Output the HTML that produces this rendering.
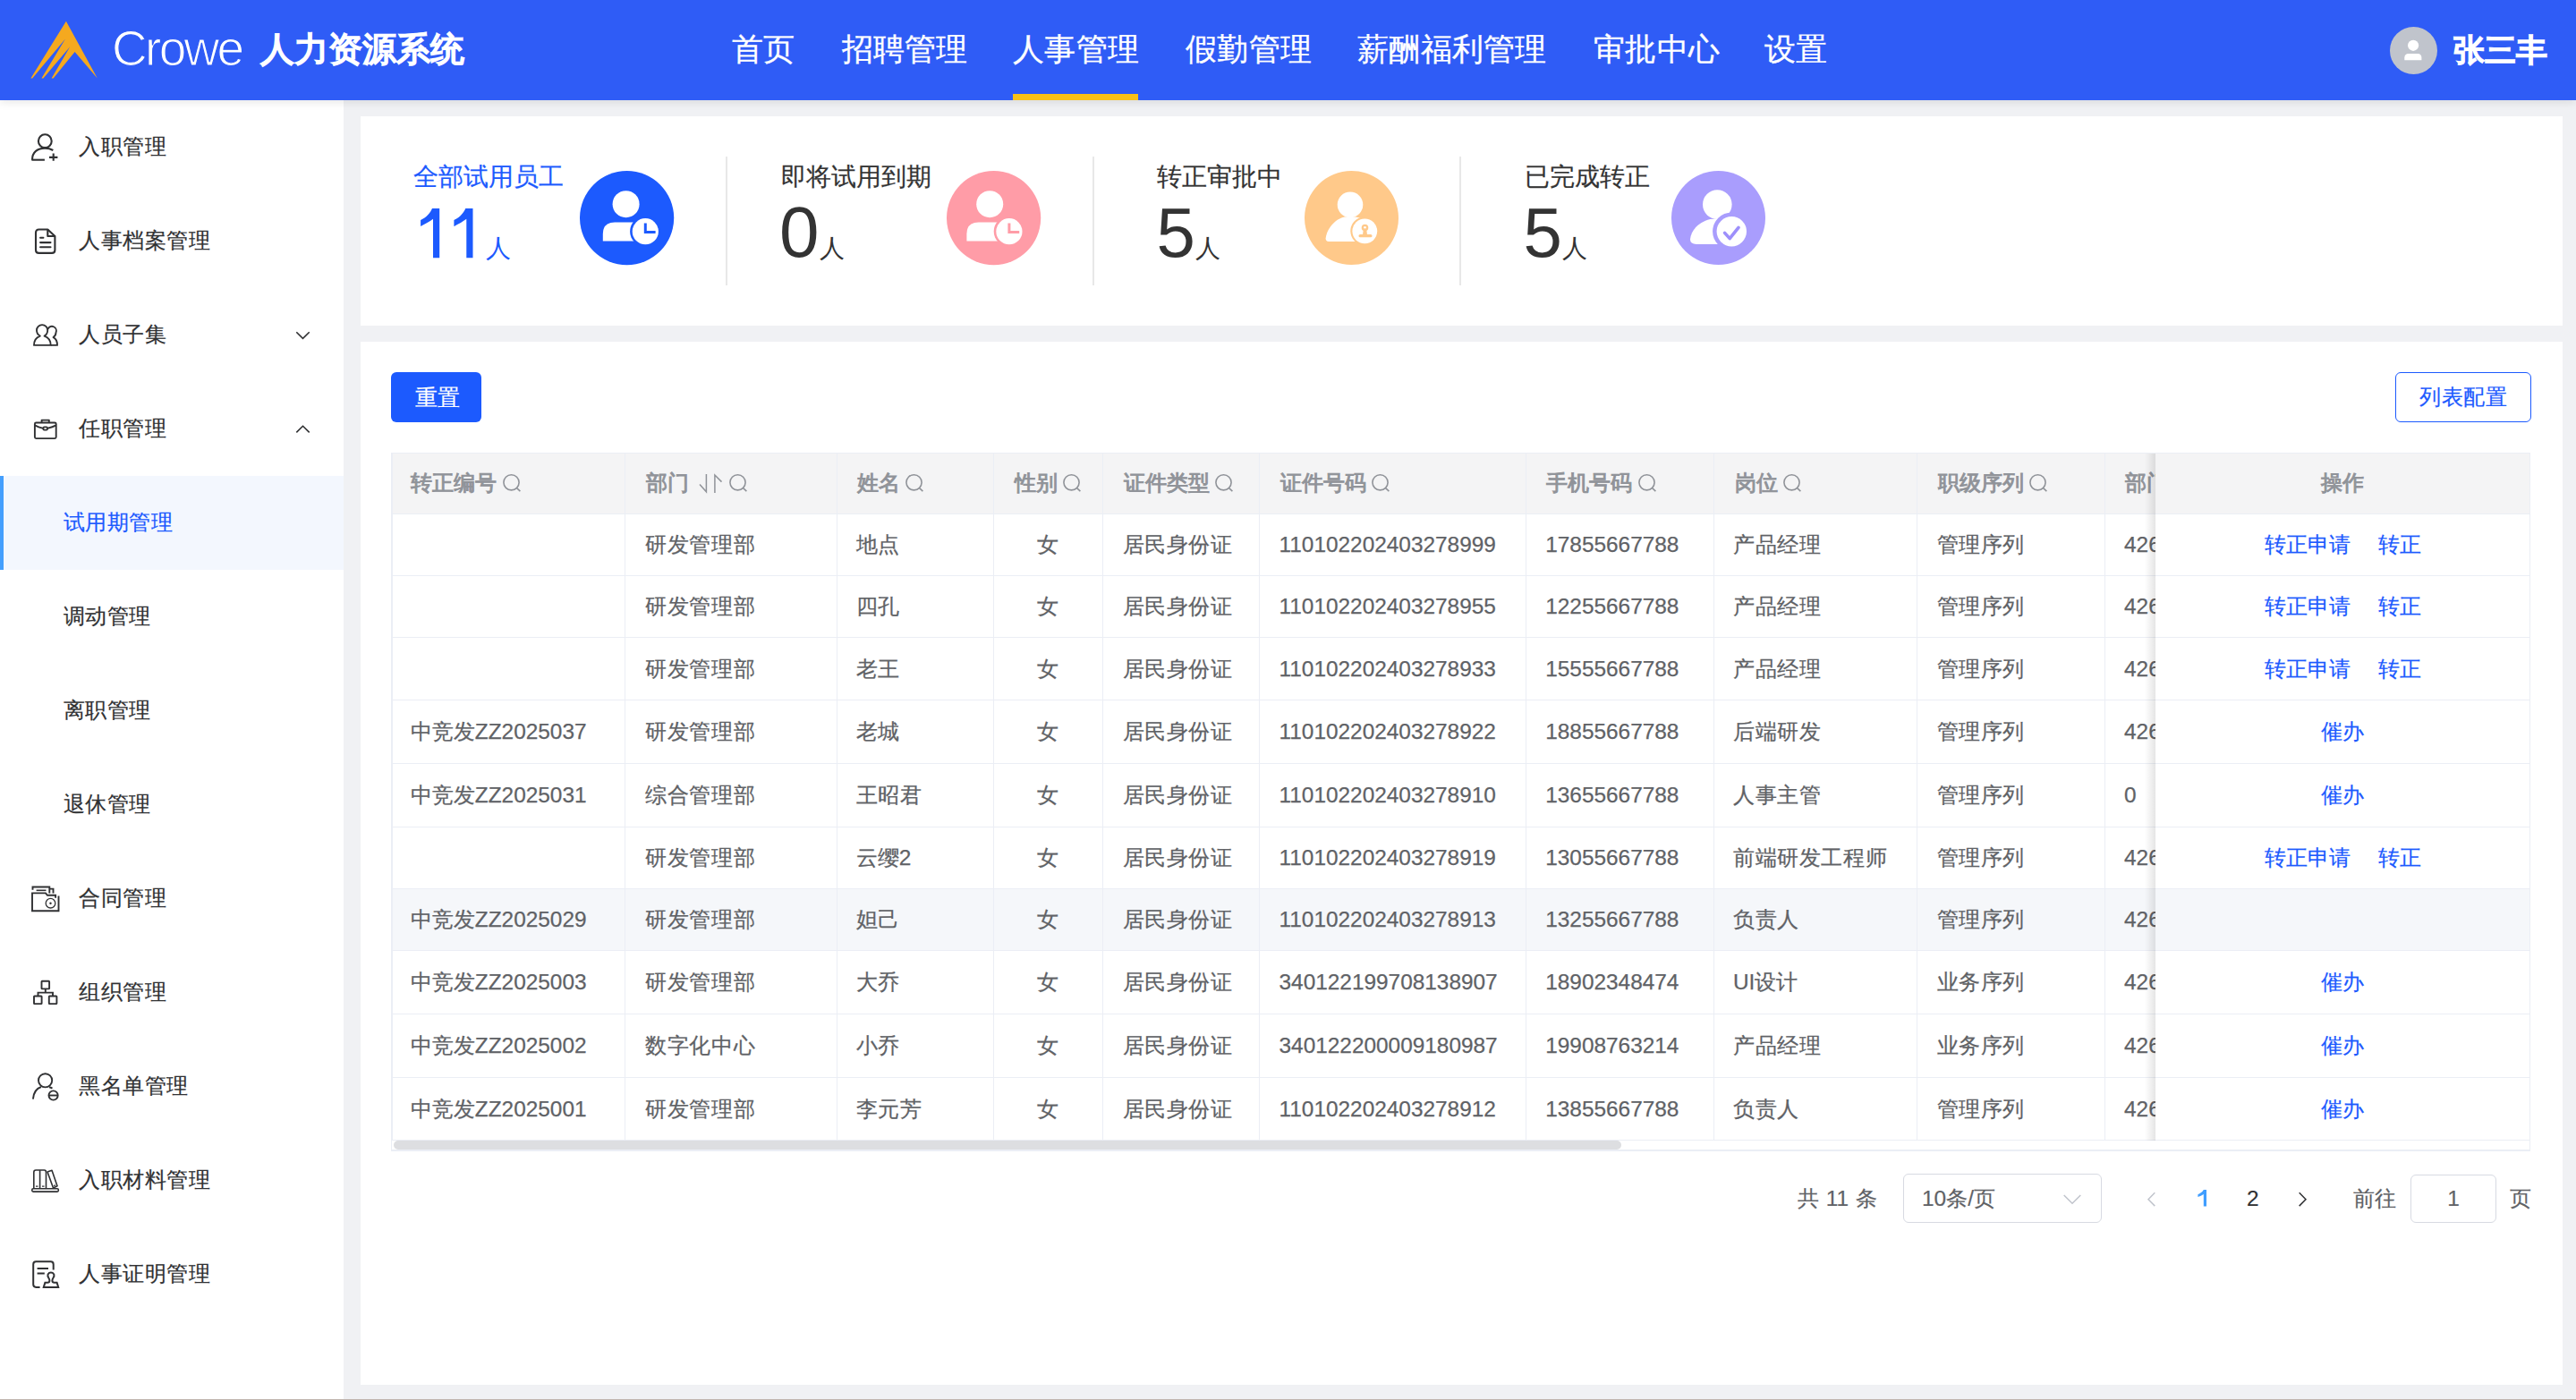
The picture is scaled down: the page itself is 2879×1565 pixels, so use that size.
<!DOCTYPE html>
<html><head><meta charset="utf-8">
<style>
*{box-sizing:border-box;margin:0;padding:0}
html,body{width:2879px;height:1565px;overflow:hidden}
body{position:relative;background:#f0f1f4;font-family:"Liberation Sans",sans-serif;color:#303133}
.abs{position:absolute}
#hdr{position:absolute;left:0;top:0;width:2879px;height:112px;background:#2f5cf6;z-index:5;box-shadow:0 2px 10px rgba(0,0,0,0.10)}
.nav{position:absolute;top:-1px;height:112px;line-height:112px;font-size:35px;letter-spacing:0.3px;color:#fff;white-space:nowrap;-webkit-text-stroke:0.3px #fff}
.nav.on:after{content:"";position:absolute;left:0;width:140px;bottom:-1px;height:7px;background:#f8c117}
#side{position:absolute;left:0;top:112px;width:384px;height:1452px;background:#fff}
.mi{position:absolute;left:0;width:384px;height:105px;line-height:105px;font-size:24px;letter-spacing:0.5px;color:#303133;white-space:nowrap;-webkit-text-stroke:0.2px currentColor}
.mi .t{position:absolute;left:88px;top:-1px}
.mi.sub .t{left:70.5px}
.mi svg{position:absolute;left:25px;top:23px}
.mi.on{background:#f3f7fe;color:#1c5afe}
.mi.on:before{content:"";position:absolute;left:0;top:0;width:4px;height:105px;background:#449ffd}
.card{position:absolute;background:#fff}
.stl{position:absolute;font-size:28px;line-height:28px;color:#333;white-space:nowrap;-webkit-text-stroke:0.2px currentColor}
.stn{position:absolute;font-size:78px;line-height:78px;color:#333;white-space:nowrap}
.stu{position:absolute;font-size:28px;line-height:28px;color:#333}
.div{position:absolute;top:175px;width:2px;height:144px;background:#e8e8e8}
.th{font-size:24.4px;color:#909399;-webkit-text-stroke:1px #909399;white-space:nowrap}
.td{font-size:24.4px;color:#606266;white-space:nowrap;-webkit-text-stroke:0.25px #606266}
.cj{font-size:24px;letter-spacing:0.6px}
.lk{font-size:24.4px;color:#1c5afe;white-space:nowrap;-webkit-text-stroke:0.2px #1c5afe}
.pg{font-size:24.4px;color:#606266;white-space:nowrap;-webkit-text-stroke:0.2px currentColor}
</style></head><body>
<div id="hdr">
  <svg class="abs" style="left:0;top:0" width="130" height="112" viewBox="0 0 130 112">
    <path fill="#f5a91f" d="M73.9 23.8 L108.8 87.5 L83.6 58 L59.6 87.5 L57.6 87.5 L78.2 52.3 L48.4 87.5 L46.4 87.5 L73 43.5 L36.2 87.5 L34.4 87.5 Z"/>
  </svg>
  <div class="abs" style="left:125px;top:27px;font-size:55px;line-height:55px;color:#fff;letter-spacing:-2.7px;-webkit-text-stroke:1.2px #2f5cf6">Crowe</div>
  <div class="abs" style="left:290.5px;top:36px;font-size:38px;line-height:38px;color:#fff;-webkit-text-stroke:1.9px #fff">人力资源系统</div>
  <div class="nav" style="left:818px">首页</div>
  <div class="nav" style="left:940.5px">招聘管理</div>
  <div class="nav on" style="left:1132px">人事管理</div>
  <div class="nav" style="left:1325px">假勤管理</div>
  <div class="nav" style="left:1517px">薪酬福利管理</div>
  <div class="nav" style="left:1781px">审批中心</div>
  <div class="nav" style="left:1972px">设置</div>
  <svg class="abs" style="left:2671px;top:30px" width="53" height="53" viewBox="0 0 53 53"><circle cx="26.5" cy="26.5" r="26.5" fill="#c0c4cc"/><circle cx="26.1" cy="20.8" r="6.1" fill="#fff"/><path d="M16.3 37.3 V34.6 Q16.3 29.9 21 29.9 H31 Q35.4 29.9 35.4 34.6 V37.3 Z" fill="#fff"/></svg>
  <div class="abs" style="left:2742px;top:0;height:112px;line-height:112px;font-size:35px;color:#fff;-webkit-text-stroke:2.1px #fff">张三丰</div>
</div>

<div id="side">
  <div class="mi" style="top:0">
    <svg width="60" height="60" viewBox="0 0 60 60" fill="none" stroke="#303133" stroke-width="2.1" stroke-linecap="butt"><circle cx="25.3" cy="22.7" r="7.4"/><path d="M11 43.7 C11 35 17 30.6 25.3 30.6 C29 30.6 32 31.5 34.3 33"/><path d="M10.4 43.7 H24.9"/><path d="M30 40.9 H39.4 M34.7 36.4 V44.8"/></svg>
    <span class="t">入职管理</span></div>
  <div class="mi" style="top:105px">
    <svg width="60" height="60" viewBox="0 0 60 60" fill="none" stroke="#303133" stroke-width="2.1" stroke-linejoin="round"><path d="M28.3 16.5 H18.5 Q15 16.5 15 20 V39.4 Q15 42.9 18.5 42.9 H32.9 Q36.4 42.9 36.4 39.4 V24 Z"/><path d="M28.3 16.5 V24 H36.4"/><path d="M20.1 25.7 H23.4 M20.1 31.1 H31.5 M20.1 36.2 H31.5" stroke-linecap="round"/></svg>
    <span class="t">人事档案管理</span></div>
  <div class="mi" style="top:210px">
    <svg width="60" height="60" viewBox="0 0 60 60" fill="none" stroke="#303133" stroke-width="1.9" stroke-linejoin="round"><path d="M13 40.9 C13 35 16 32 19.8 30.6 C17 29 16 27 16 24.2 A6.1 6.1 0 0 1 28.2 24.2 C28.2 27 27 29 24.6 30.6 C28.5 32 31.7 35.5 31.7 40.9 Z"/><path d="M28.4 22.8 A4.9 4.9 0 0 1 37.5 26.8 C37.5 29 36.5 30.8 34.6 32.1 C37.4 33.4 39 36.5 39 40.9 H31.7"/></svg>
    <span class="t">人员子集</span>
    <svg style="left:326px;top:43px" width="25" height="20" viewBox="0 0 25 20" fill="none" stroke="#303133" stroke-width="1.6"><path d="M5.3 6.3 L12.5 13.4 L19.7 6.3"/></svg></div>
  <div class="mi" style="top:315px">
    <svg width="60" height="60" viewBox="0 0 60 60" fill="none" stroke="#303133" stroke-width="1.9" stroke-linejoin="round"><rect x="13.9" y="22.5" width="23.8" height="17.6" rx="1.5"/><path d="M21.6 22.5 V19.6 H29.8 V22.5"/><path d="M13.9 25.3 C17 27 20 28 23.4 28.9 M27.9 28.9 C31.3 28 34.5 27 37.7 25.3"/><rect x="23.4" y="27.4" width="4.5" height="3.2" rx="1"/></svg>
    <span class="t">任职管理</span>
    <svg style="left:326px;top:43px" width="25" height="20" viewBox="0 0 25 20" fill="none" stroke="#303133" stroke-width="1.6"><path d="M5.3 13.4 L12.5 6.3 L19.7 13.4"/></svg></div>
  <div class="mi sub on" style="top:420px"><span class="t">试用期管理</span></div>
  <div class="mi sub" style="top:525px"><span class="t">调动管理</span></div>
  <div class="mi sub" style="top:630px"><span class="t">离职管理</span></div>
  <div class="mi sub" style="top:735px"><span class="t">退休管理</span></div>
  <div class="mi" style="top:840px">
    <svg width="60" height="60" viewBox="0 0 60 60" fill="none" stroke="#303133" stroke-width="1.9"><path d="M11.5 19.8 V16.5 H30.3 V23.5 M30.3 18.6 H34.5 V23.5"/><path d="M15.6 20.3 H26.5" stroke-width="1.6"/><path d="M37.1 28.8 V25.8 H28 L26 23.4 H11 V43.2 H40.5 V26.4"/><circle cx="31.5" cy="34.7" r="5.3" stroke-width="1.3"/><circle cx="31.5" cy="34.8" r="1.2" fill="#303133" stroke="none"/></svg>
    <span class="t">合同管理</span></div>
  <div class="mi" style="top:945px">
    <svg width="60" height="60" viewBox="0 0 60 60" fill="none" stroke="#303133" stroke-width="1.9"><rect x="21.5" y="16.8" width="8.6" height="8.6" rx="0.6"/><path d="M25.8 25.4 V29.6 M17.5 33.5 V29.6 H34 V33.5"/><rect x="13" y="33.5" width="8.6" height="8.6" rx="0.6"/><rect x="29.8" y="33.5" width="8.6" height="8.6" rx="0.6"/></svg>
    <span class="t">组织管理</span></div>
  <div class="mi" style="top:1050px">
    <svg width="60" height="60" viewBox="0 0 60 60" fill="none" stroke="#303133" stroke-width="1.9"><circle cx="25.6" cy="22.8" r="7.6"/><path d="M11.9 43.6 C12.5 36 16.5 31.5 21 30 M30 30.2 C31.5 30.5 32.5 31 33.5 31.6"/><circle cx="34.6" cy="39.5" r="5.1"/><path d="M29.8 39.5 H39.4"/></svg>
    <span class="t">黑名单管理</span></div>
  <div class="mi" style="top:1155px">
    <svg width="60" height="60" viewBox="0 0 60 60" fill="none" stroke="#303133" stroke-width="1.6" stroke-linejoin="round"><path d="M12.8 38.7 V20.5 Q12.8 18 15 18 H24.5 Q26.5 18 26.5 20.5 V38.7"/><path d="M19.6 18 V38.7"/><path d="M28 20 L33 18.3 L39 35.8 L34.5 38 Z"/><rect x="10.8" y="38.8" width="29.5" height="3.3" rx="1.3"/><path d="M15 36.2 H17.5 M22 36.2 H24.5 M35 35.5 L37 34.8" stroke-width="1.3"/></svg>
    <span class="t">入职材料管理</span></div>
  <div class="mi" style="top:1260px">
    <svg width="60" height="60" viewBox="0 0 60 60" fill="none" stroke="#303133" stroke-width="2"><path d="M19.6 43.9 H15.3 Q12.2 43.9 12.2 40.8 V18.4 Q12.2 15.3 15.3 15.3 H31.6 Q34.7 15.3 34.7 18.4 V24.5"/><path d="M16.6 22.9 H29 M16.6 28.6 H24.8"/><path d="M23.8 43.9 L25.4 38.8 H28 Q30.4 38.8 30.4 36.5 Q30.4 35 29.2 33.2 Q28 31.5 28.6 29.5 Q29.8 27.6 31.9 27.6 Q34 27.6 35.3 29.5 Q35.9 31.5 34.6 33.2 Q33.4 35 33.4 36.5 Q33.4 38.8 35.8 38.8 H38.6 L40.2 43.9 Z"/></svg>
    <span class="t">人事证明管理</span></div>
</div>
<div class="abs" style="left:0;top:1564px;width:2879px;height:1px;background:#c0b5af"></div>

<div class="card" style="left:403px;top:130px;width:2461px;height:234px"></div>
<div class="stl" style="left:462px;top:184px;color:#1c5afe">全部试用员工</div>
<svg class="abs" style="left:483.7px;top:232.7px;overflow:visible" width="50" height="56" viewBox="0 0 50 56" fill="#1c5afe"><path transform="translate(0 0)" d="M0 0 H7.2 V55.3 H0 V11.8 C-4 14.6 -9 17.8 -13.9 19.9 V13 C-7.5 10 -3 5 -1 0 Z"/><path transform="translate(37.3 0)" d="M0 0 H7.2 V55.3 H0 V11.8 C-4 14.6 -9 17.8 -13.9 19.9 V13 C-7.5 10 -3 5 -1 0 Z"/></svg><div class="stu" style="left:543px;top:264px;color:#1c5afe">人</div>
<div class="abs" style="left:647.7px;top:190.9px"><svg width="106" height="106" viewBox="0 0 106 106"><circle cx="52.6" cy="52.6" r="52.6" fill="#1c5afe"/><circle cx="51.6" cy="37.2" r="15" fill="#fff"/><path d="M25.8 78.5 V70.5 Q25.8 57.4 39 57.4 H62 V78.5 Z" fill="#fff"/><circle cx="73.3" cy="67.7" r="17.2" fill="#1c5afe"/><circle cx="73.3" cy="67.7" r="14.6" fill="#fff"/><path d="M73.3 58.4 V68.6 H84.6" fill="none" stroke="#1c5afe" stroke-width="3"/></svg></div>
<div class="div" style="left:811px"></div>
<div class="stl" style="left:873px;top:184px">即将试用到期</div>
<div class="stn" style="left:871px;top:221px;font-size:80px">0</div><div class="stu" style="left:916px;top:264px">人</div>
<div class="abs" style="left:1057.8px;top:190.9px"><svg width="106" height="106" viewBox="0 0 106 106"><circle cx="52.6" cy="52.6" r="52.6" fill="#ff9ca7"/><g transform="translate(-3.4 0)"><circle cx="51.6" cy="37.2" r="15" fill="#fff"/><path d="M25.8 78.5 V70.5 Q25.8 57.4 39 57.4 H62 V78.5 Z" fill="#fff"/><circle cx="73.3" cy="67.7" r="17.2" fill="#ff9ca7"/><circle cx="73.3" cy="67.7" r="14.6" fill="#fff"/><path d="M73.3 58.4 V68.6 H84.6" fill="none" stroke="#ff9ca7" stroke-width="3"/></g></svg></div>
<div class="div" style="left:1221px"></div>
<div class="stl" style="left:1293px;top:184px">转正审批中</div>
<div class="stn" style="left:1292.5px;top:221px">5</div><div class="stu" style="left:1336px;top:264px">人</div>
<div class="abs" style="left:1458.1px;top:191px"><svg width="106" height="106" viewBox="0 0 106 106"><circle cx="52.5" cy="52.5" r="52.5" fill="#ffc98a"/><circle cx="51" cy="37.8" r="14.3" fill="#fff"/><path d="M44.6 51.5 C33 54 24.5 66 23.6 75.5 Q23.6 78.9 27 78.9 H66 V54 Q62 52 57 51.5 Z" fill="#fff"/><circle cx="67.3" cy="67.3" r="16" fill="#ffc98a"/><circle cx="67.3" cy="67.3" r="13.9" fill="#fff"/><circle cx="67.5" cy="63.6" r="3.8" fill="#ffc98a"/><circle cx="67.5" cy="63.3" r="1.3" fill="#fff"/><path d="M65.6 66.5 L65 71.5 H70 L69.4 66.5 Z" fill="#ffc98a"/><rect x="60.5" y="71" width="15" height="3.3" rx="1.6" fill="#ffc98a"/></svg></div>
<div class="div" style="left:1631px"></div>
<div class="stl" style="left:1704px;top:184px">已完成转正</div>
<div class="stn" style="left:1702.5px;top:221px">5</div><div class="stu" style="left:1746px;top:264px">人</div>
<div class="abs" style="left:1868.1px;top:191px"><svg width="106" height="106" viewBox="0 0 106 106"><circle cx="52.5" cy="52.5" r="52.5" fill="#a99dfd"/><circle cx="51.3" cy="37.6" r="16.3" fill="#fff"/><path d="M43.3 54 C31 57 22 66 21 76.5 Q21 81.9 28 81.9 H62 V56 Q58 53.5 55 53.5 Z" fill="#fff"/><circle cx="67.3" cy="67.7" r="21.2" fill="#a99dfd"/><circle cx="67.3" cy="67.7" r="16.7" fill="#fff"/><path d="M59.6 69.4 L65.2 75.6 L75 63.3" fill="none" stroke="#9d8ffb" stroke-width="3.6" stroke-linecap="round" stroke-linejoin="round"/></svg></div>

<div class="card" style="left:403px;top:382px;width:2461px;height:1166px"></div>

<!--TABLE-->
<div class="abs" style="left:437px;top:416px;width:101px;height:56px;border-radius:6px;background:#1c5afe"></div>
<div class="abs" style="left:463.5px;top:416px;height:56px;line-height:56px;font-size:25px;color:#fff;-webkit-text-stroke:0.2px #fff">重置</div>
<div class="abs" style="left:2677px;top:416px;width:152px;height:56px;border-radius:6px;border:1.5px solid #1c5afe;background:#fff"></div>
<div class="abs" style="left:2704px;top:416px;height:56px;line-height:56px;font-size:24.4px;letter-spacing:0.5px;color:#1c5afe;-webkit-text-stroke:0.2px #1c5afe">列表配置</div>
<div class="abs" style="left:437px;top:506px;width:2391px;height:781px;border:1px solid #ebeef5;border-bottom-width:2px;overflow:hidden;background:#fff">
<div class="abs" style="left:0;top:0;width:2389px;height:67px;background:#f4f4f5"></div>
<div class="abs" style="left:0;top:487px;width:2389px;height:68px;background:#f5f7fa"></div>
<div class="abs" style="left:0;top:67px;width:2389px;height:1px;background:#ebeef5"></div>
<div class="abs" style="left:0;top:136px;width:2389px;height:1px;background:#ebeef5"></div>
<div class="abs" style="left:0;top:205px;width:2389px;height:1px;background:#ebeef5"></div>
<div class="abs" style="left:0;top:275px;width:2389px;height:1px;background:#ebeef5"></div>
<div class="abs" style="left:0;top:346px;width:2389px;height:1px;background:#ebeef5"></div>
<div class="abs" style="left:0;top:417px;width:2389px;height:1px;background:#ebeef5"></div>
<div class="abs" style="left:0;top:486px;width:2389px;height:1px;background:#ebeef5"></div>
<div class="abs" style="left:0;top:555px;width:2389px;height:1px;background:#ebeef5"></div>
<div class="abs" style="left:0;top:626px;width:2389px;height:1px;background:#ebeef5"></div>
<div class="abs" style="left:0;top:697px;width:2389px;height:1px;background:#ebeef5"></div>
<div class="abs" style="left:0;top:767px;width:2389px;height:1px;background:#ebeef5"></div>
<div class="abs" style="left:260.0px;top:0;width:1px;height:767px;background:#ebeef5"></div>
<div class="abs" style="left:497.0px;top:0;width:1px;height:767px;background:#ebeef5"></div>
<div class="abs" style="left:672.0px;top:0;width:1px;height:767px;background:#ebeef5"></div>
<div class="abs" style="left:794.0px;top:0;width:1px;height:767px;background:#ebeef5"></div>
<div class="abs" style="left:969.0px;top:0;width:1px;height:767px;background:#ebeef5"></div>
<div class="abs" style="left:1267.0px;top:0;width:1px;height:767px;background:#ebeef5"></div>
<div class="abs" style="left:1477.0px;top:0;width:1px;height:767px;background:#ebeef5"></div>
<div class="abs" style="left:1704.0px;top:0;width:1px;height:767px;background:#ebeef5"></div>
<div class="abs" style="left:1914.0px;top:0;width:1px;height:767px;background:#ebeef5"></div>
<div class="abs" style="left:0;top:0;width:1px;height:767px;background:#ebeef5"></div>
<div class="abs th" style="left:21.0px;top:-1px;height:67px;line-height:67px">转正编号</div>
<svg class="abs" style="left:122.6px;top:21px" width="24" height="24" viewBox="0 0 24 24" fill="none" stroke="#909399" stroke-width="1.6"><circle cx="10.5" cy="11.3" r="8.6"/><path d="M16.6 17.6 L20.4 21.2"/></svg>
<div class="abs th" style="left:284.1px;top:-1px;height:67px;line-height:67px">部门</div>
<svg class="abs" style="left:342px;top:21px" width="30" height="24" viewBox="0 0 30 24" fill="none" stroke="#909399" stroke-width="1.5"><path d="M9.4 1.9 V21.8 L2 13.4"/><path d="M18.9 23 V3 L26.5 10.6"/></svg>
<svg class="abs" style="left:375.5px;top:21px" width="24" height="24" viewBox="0 0 24 24" fill="none" stroke="#909399" stroke-width="1.6"><circle cx="10.5" cy="11.3" r="8.6"/><path d="M16.6 17.6 L20.4 21.2"/></svg>
<div class="abs th" style="left:519.8px;top:-1px;height:67px;line-height:67px">姓名</div>
<svg class="abs" style="left:572.6px;top:21px" width="24" height="24" viewBox="0 0 24 24" fill="none" stroke="#909399" stroke-width="1.6"><circle cx="10.5" cy="11.3" r="8.6"/><path d="M16.6 17.6 L20.4 21.2"/></svg>
<div class="abs th" style="left:695.9px;top:-1px;height:67px;line-height:67px">性别</div>
<svg class="abs" style="left:748.7px;top:21px" width="24" height="24" viewBox="0 0 24 24" fill="none" stroke="#909399" stroke-width="1.6"><circle cx="10.5" cy="11.3" r="8.6"/><path d="M16.6 17.6 L20.4 21.2"/></svg>
<div class="abs th" style="left:817.7px;top:-1px;height:67px;line-height:67px">证件类型</div>
<svg class="abs" style="left:919.3px;top:21px" width="24" height="24" viewBox="0 0 24 24" fill="none" stroke="#909399" stroke-width="1.6"><circle cx="10.5" cy="11.3" r="8.6"/><path d="M16.6 17.6 L20.4 21.2"/></svg>
<div class="abs th" style="left:992.5px;top:-1px;height:67px;line-height:67px">证件号码</div>
<svg class="abs" style="left:1094.1px;top:21px" width="24" height="24" viewBox="0 0 24 24" fill="none" stroke="#909399" stroke-width="1.6"><circle cx="10.5" cy="11.3" r="8.6"/><path d="M16.6 17.6 L20.4 21.2"/></svg>
<div class="abs th" style="left:1290.2px;top:-1px;height:67px;line-height:67px">手机号码</div>
<svg class="abs" style="left:1391.8px;top:21px" width="24" height="24" viewBox="0 0 24 24" fill="none" stroke="#909399" stroke-width="1.6"><circle cx="10.5" cy="11.3" r="8.6"/><path d="M16.6 17.6 L20.4 21.2"/></svg>
<div class="abs th" style="left:1500.8px;top:-1px;height:67px;line-height:67px">岗位</div>
<svg class="abs" style="left:1553.6px;top:21px" width="24" height="24" viewBox="0 0 24 24" fill="none" stroke="#909399" stroke-width="1.6"><circle cx="10.5" cy="11.3" r="8.6"/><path d="M16.6 17.6 L20.4 21.2"/></svg>
<div class="abs th" style="left:1727.5px;top:-1px;height:67px;line-height:67px">职级序列</div>
<svg class="abs" style="left:1829.1px;top:21px" width="24" height="24" viewBox="0 0 24 24" fill="none" stroke="#909399" stroke-width="1.6"><circle cx="10.5" cy="11.3" r="8.6"/><path d="M16.6 17.6 L20.4 21.2"/></svg>
<div class="abs th" style="left:1937.1px;top:-1px;height:67px;line-height:67px">部门</div>
<div class="abs td cj" style="left:283.2px;top:68px;height:68px;line-height:68px">研发管理部</div>
<div class="abs td cj" style="left:518.8px;top:68px;height:68px;line-height:68px">地点</div>
<div class="abs td" style="left:672.0px;width:122.0px;text-align:center;top:68px;height:68px;line-height:68px">女</div>
<div class="abs td cj" style="left:816.7px;top:68px;height:68px;line-height:68px">居民身份证</div>
<div class="abs td" style="left:991.5px;top:68px;height:68px;line-height:68px">110102202403278999</div>
<div class="abs td" style="left:1289.2px;top:68px;height:68px;line-height:68px">17855667788</div>
<div class="abs td cj" style="left:1499.0px;top:68px;height:68px;line-height:68px">产品经理</div>
<div class="abs td cj" style="left:1726.5px;top:68px;height:68px;line-height:68px">管理序列</div>
<div class="abs td" style="left:1936.0px;top:68px;height:68px;line-height:68px">426</div>
<div class="abs td cj" style="left:283.2px;top:137px;height:68px;line-height:68px">研发管理部</div>
<div class="abs td cj" style="left:518.8px;top:137px;height:68px;line-height:68px">四孔</div>
<div class="abs td" style="left:672.0px;width:122.0px;text-align:center;top:137px;height:68px;line-height:68px">女</div>
<div class="abs td cj" style="left:816.7px;top:137px;height:68px;line-height:68px">居民身份证</div>
<div class="abs td" style="left:991.5px;top:137px;height:68px;line-height:68px">110102202403278955</div>
<div class="abs td" style="left:1289.2px;top:137px;height:68px;line-height:68px">12255667788</div>
<div class="abs td cj" style="left:1499.0px;top:137px;height:68px;line-height:68px">产品经理</div>
<div class="abs td cj" style="left:1726.5px;top:137px;height:68px;line-height:68px">管理序列</div>
<div class="abs td" style="left:1936.0px;top:137px;height:68px;line-height:68px">426</div>
<div class="abs td cj" style="left:283.2px;top:206px;height:69px;line-height:69px">研发管理部</div>
<div class="abs td cj" style="left:518.8px;top:206px;height:69px;line-height:69px">老王</div>
<div class="abs td" style="left:672.0px;width:122.0px;text-align:center;top:206px;height:69px;line-height:69px">女</div>
<div class="abs td cj" style="left:816.7px;top:206px;height:69px;line-height:69px">居民身份证</div>
<div class="abs td" style="left:991.5px;top:206px;height:69px;line-height:69px">110102202403278933</div>
<div class="abs td" style="left:1289.2px;top:206px;height:69px;line-height:69px">15555667788</div>
<div class="abs td cj" style="left:1499.0px;top:206px;height:69px;line-height:69px">产品经理</div>
<div class="abs td cj" style="left:1726.5px;top:206px;height:69px;line-height:69px">管理序列</div>
<div class="abs td" style="left:1936.0px;top:206px;height:69px;line-height:69px">426</div>
<div class="abs td" style="left:20.8px;top:276px;height:70px;line-height:70px">中竞发ZZ2025037</div>
<div class="abs td cj" style="left:283.2px;top:276px;height:70px;line-height:70px">研发管理部</div>
<div class="abs td cj" style="left:518.8px;top:276px;height:70px;line-height:70px">老城</div>
<div class="abs td" style="left:672.0px;width:122.0px;text-align:center;top:276px;height:70px;line-height:70px">女</div>
<div class="abs td cj" style="left:816.7px;top:276px;height:70px;line-height:70px">居民身份证</div>
<div class="abs td" style="left:991.5px;top:276px;height:70px;line-height:70px">110102202403278922</div>
<div class="abs td" style="left:1289.2px;top:276px;height:70px;line-height:70px">18855667788</div>
<div class="abs td cj" style="left:1499.0px;top:276px;height:70px;line-height:70px">后端研发</div>
<div class="abs td cj" style="left:1726.5px;top:276px;height:70px;line-height:70px">管理序列</div>
<div class="abs td" style="left:1936.0px;top:276px;height:70px;line-height:70px">426</div>
<div class="abs td" style="left:20.8px;top:347px;height:70px;line-height:70px">中竞发ZZ2025031</div>
<div class="abs td cj" style="left:283.2px;top:347px;height:70px;line-height:70px">综合管理部</div>
<div class="abs td cj" style="left:518.8px;top:347px;height:70px;line-height:70px">王昭君</div>
<div class="abs td" style="left:672.0px;width:122.0px;text-align:center;top:347px;height:70px;line-height:70px">女</div>
<div class="abs td cj" style="left:816.7px;top:347px;height:70px;line-height:70px">居民身份证</div>
<div class="abs td" style="left:991.5px;top:347px;height:70px;line-height:70px">110102202403278910</div>
<div class="abs td" style="left:1289.2px;top:347px;height:70px;line-height:70px">13655667788</div>
<div class="abs td cj" style="left:1499.0px;top:347px;height:70px;line-height:70px">人事主管</div>
<div class="abs td cj" style="left:1726.5px;top:347px;height:70px;line-height:70px">管理序列</div>
<div class="abs td" style="left:1936.0px;top:347px;height:70px;line-height:70px">0</div>
<div class="abs td cj" style="left:283.2px;top:418px;height:68px;line-height:68px">研发管理部</div>
<div class="abs td" style="left:518.8px;top:418px;height:68px;line-height:68px">云缨2</div>
<div class="abs td" style="left:672.0px;width:122.0px;text-align:center;top:418px;height:68px;line-height:68px">女</div>
<div class="abs td cj" style="left:816.7px;top:418px;height:68px;line-height:68px">居民身份证</div>
<div class="abs td" style="left:991.5px;top:418px;height:68px;line-height:68px">110102202403278919</div>
<div class="abs td" style="left:1289.2px;top:418px;height:68px;line-height:68px">13055667788</div>
<div class="abs td cj" style="left:1499.0px;top:418px;height:68px;line-height:68px">前端研发工程师</div>
<div class="abs td cj" style="left:1726.5px;top:418px;height:68px;line-height:68px">管理序列</div>
<div class="abs td" style="left:1936.0px;top:418px;height:68px;line-height:68px">426</div>
<div class="abs td" style="left:20.8px;top:487px;height:68px;line-height:68px">中竞发ZZ2025029</div>
<div class="abs td cj" style="left:283.2px;top:487px;height:68px;line-height:68px">研发管理部</div>
<div class="abs td cj" style="left:518.8px;top:487px;height:68px;line-height:68px">妲己</div>
<div class="abs td" style="left:672.0px;width:122.0px;text-align:center;top:487px;height:68px;line-height:68px">女</div>
<div class="abs td cj" style="left:816.7px;top:487px;height:68px;line-height:68px">居民身份证</div>
<div class="abs td" style="left:991.5px;top:487px;height:68px;line-height:68px">110102202403278913</div>
<div class="abs td" style="left:1289.2px;top:487px;height:68px;line-height:68px">13255667788</div>
<div class="abs td cj" style="left:1499.0px;top:487px;height:68px;line-height:68px">负责人</div>
<div class="abs td cj" style="left:1726.5px;top:487px;height:68px;line-height:68px">管理序列</div>
<div class="abs td" style="left:1936.0px;top:487px;height:68px;line-height:68px">426</div>
<div class="abs td" style="left:20.8px;top:556px;height:70px;line-height:70px">中竞发ZZ2025003</div>
<div class="abs td cj" style="left:283.2px;top:556px;height:70px;line-height:70px">研发管理部</div>
<div class="abs td cj" style="left:518.8px;top:556px;height:70px;line-height:70px">大乔</div>
<div class="abs td" style="left:672.0px;width:122.0px;text-align:center;top:556px;height:70px;line-height:70px">女</div>
<div class="abs td cj" style="left:816.7px;top:556px;height:70px;line-height:70px">居民身份证</div>
<div class="abs td" style="left:991.5px;top:556px;height:70px;line-height:70px">340122199708138907</div>
<div class="abs td" style="left:1289.2px;top:556px;height:70px;line-height:70px">18902348474</div>
<div class="abs td" style="left:1499.0px;top:556px;height:70px;line-height:70px">UI设计</div>
<div class="abs td cj" style="left:1726.5px;top:556px;height:70px;line-height:70px">业务序列</div>
<div class="abs td" style="left:1936.0px;top:556px;height:70px;line-height:70px">426</div>
<div class="abs td" style="left:20.8px;top:627px;height:70px;line-height:70px">中竞发ZZ2025002</div>
<div class="abs td cj" style="left:283.2px;top:627px;height:70px;line-height:70px">数字化中心</div>
<div class="abs td cj" style="left:518.8px;top:627px;height:70px;line-height:70px">小乔</div>
<div class="abs td" style="left:672.0px;width:122.0px;text-align:center;top:627px;height:70px;line-height:70px">女</div>
<div class="abs td cj" style="left:816.7px;top:627px;height:70px;line-height:70px">居民身份证</div>
<div class="abs td" style="left:991.5px;top:627px;height:70px;line-height:70px">340122200009180987</div>
<div class="abs td" style="left:1289.2px;top:627px;height:70px;line-height:70px">19908763214</div>
<div class="abs td cj" style="left:1499.0px;top:627px;height:70px;line-height:70px">产品经理</div>
<div class="abs td cj" style="left:1726.5px;top:627px;height:70px;line-height:70px">业务序列</div>
<div class="abs td" style="left:1936.0px;top:627px;height:70px;line-height:70px">426</div>
<div class="abs td" style="left:20.8px;top:698px;height:69px;line-height:69px">中竞发ZZ2025001</div>
<div class="abs td cj" style="left:283.2px;top:698px;height:69px;line-height:69px">研发管理部</div>
<div class="abs td cj" style="left:518.8px;top:698px;height:69px;line-height:69px">李元芳</div>
<div class="abs td" style="left:672.0px;width:122.0px;text-align:center;top:698px;height:69px;line-height:69px">女</div>
<div class="abs td cj" style="left:816.7px;top:698px;height:69px;line-height:69px">居民身份证</div>
<div class="abs td" style="left:991.5px;top:698px;height:69px;line-height:69px">110102202403278912</div>
<div class="abs td" style="left:1289.2px;top:698px;height:69px;line-height:69px">13855667788</div>
<div class="abs td cj" style="left:1499.0px;top:698px;height:69px;line-height:69px">负责人</div>
<div class="abs td cj" style="left:1726.5px;top:698px;height:69px;line-height:69px">管理序列</div>
<div class="abs td" style="left:1936.0px;top:698px;height:69px;line-height:69px">426</div>
<div class="abs" style="left:1959px;top:0;width:12px;height:768px;background:linear-gradient(to left, rgba(0,0,0,0.10), rgba(0,0,0,0))"></div>
<div class="abs" style="left:1971px;top:0;width:418px;height:768px;background:#fff;overflow:hidden">
<div class="abs" style="left:0;top:0;width:100%;height:67px;background:#f4f4f5"></div>
<div class="abs" style="left:0;top:487px;width:100%;height:68px;background:#f5f7fa"></div>
<div class="abs" style="left:0;top:67px;width:100%;height:1px;background:#ebeef5"></div>
<div class="abs" style="left:0;top:136px;width:100%;height:1px;background:#ebeef5"></div>
<div class="abs" style="left:0;top:205px;width:100%;height:1px;background:#ebeef5"></div>
<div class="abs" style="left:0;top:275px;width:100%;height:1px;background:#ebeef5"></div>
<div class="abs" style="left:0;top:346px;width:100%;height:1px;background:#ebeef5"></div>
<div class="abs" style="left:0;top:417px;width:100%;height:1px;background:#ebeef5"></div>
<div class="abs" style="left:0;top:486px;width:100%;height:1px;background:#ebeef5"></div>
<div class="abs" style="left:0;top:555px;width:100%;height:1px;background:#ebeef5"></div>
<div class="abs" style="left:0;top:626px;width:100%;height:1px;background:#ebeef5"></div>
<div class="abs" style="left:0;top:697px;width:100%;height:1px;background:#ebeef5"></div>
<div class="abs" style="left:0;top:767px;width:100%;height:1px;background:#ebeef5"></div>
<div class="abs th" style="left:0;width:100%;text-align:center;top:-1px;height:67px;line-height:67px">操作</div>
<div class="abs lk" style="left:122.3px;top:68px;height:68px;line-height:68px">转正申请</div>
<div class="abs lk" style="left:248.7px;top:68px;height:68px;line-height:68px">转正</div>
<div class="abs lk" style="left:122.3px;top:137px;height:68px;line-height:68px">转正申请</div>
<div class="abs lk" style="left:248.7px;top:137px;height:68px;line-height:68px">转正</div>
<div class="abs lk" style="left:122.3px;top:206px;height:69px;line-height:69px">转正申请</div>
<div class="abs lk" style="left:248.7px;top:206px;height:69px;line-height:69px">转正</div>
<div class="abs lk" style="left:0;width:100%;text-align:center;top:276px;height:70px;line-height:70px">催办</div>
<div class="abs lk" style="left:0;width:100%;text-align:center;top:347px;height:70px;line-height:70px">催办</div>
<div class="abs lk" style="left:122.3px;top:418px;height:68px;line-height:68px">转正申请</div>
<div class="abs lk" style="left:248.7px;top:418px;height:68px;line-height:68px">转正</div>
<div class="abs lk" style="left:0;width:100%;text-align:center;top:556px;height:70px;line-height:70px">催办</div>
<div class="abs lk" style="left:0;width:100%;text-align:center;top:627px;height:70px;line-height:70px">催办</div>
<div class="abs lk" style="left:0;width:100%;text-align:center;top:698px;height:69px;line-height:69px">催办</div>
</div>
<div class="abs" style="left:2px;top:767.5px;width:1372px;height:10.5px;border-radius:5.25px;background:#dddee1"></div>
</div>
<div class="abs pg" style="left:2009px;top:1312px;height:55px;line-height:55px;word-spacing:1px">共 11 条</div>
<div class="abs" style="left:2126.6px;top:1312.1px;width:222.8px;height:55.4px;border:1.5px solid #d7dae2;border-radius:6px;background:#fff"></div>
<div class="abs pg" style="left:2148px;top:1312px;height:55px;line-height:55px">10条/页</div>
<svg class="abs" style="left:2304px;top:1332px" width="24" height="16" viewBox="0 0 24 16" fill="none" stroke="#c0c4cc" stroke-width="1.5"><path d="M2.7 4 L12 13.3 L21.3 4"/></svg>
<svg class="abs" style="left:2396px;top:1330px" width="16" height="22" viewBox="0 0 16 22" fill="none" stroke="#c0c4cc" stroke-width="1.5"><path d="M12.3 3.2 L5 10.7 L12.3 18.1"/></svg>
<svg class="abs" style="left:2456px;top:1329.8px" width="11" height="19" viewBox="0 0 11 19" fill="#409eff"><path d="M6.8 0 H10 V18.6 H6.8 V5 C5 6.3 2.8 7.3 0.4 8 V5.2 C3 4.3 5.5 2.3 6.8 0 Z"/></svg>
<div class="abs pg" style="left:2511px;top:1312px;height:55px;line-height:55px;color:#303133">2</div>
<svg class="abs" style="left:2566px;top:1330px" width="16" height="22" viewBox="0 0 16 22" fill="none" stroke="#303133" stroke-width="1.5"><path d="M3.7 3.2 L11 10.7 L3.7 18.1"/></svg>
<div class="abs pg" style="left:2630px;top:1312px;height:55px;line-height:55px">前往</div>
<div class="abs" style="left:2693.6px;top:1312.7px;width:96.9px;height:54px;border:1.5px solid #d7dae2;border-radius:6px;background:#fff"></div>
<div class="abs pg" style="left:2693.6px;width:96.9px;text-align:center;top:1312px;height:55px;line-height:55px">1</div>
<div class="abs pg" style="left:2804.5px;top:1312px;height:55px;line-height:55px">页</div>
<!--/TABLE-->
</body></html>
